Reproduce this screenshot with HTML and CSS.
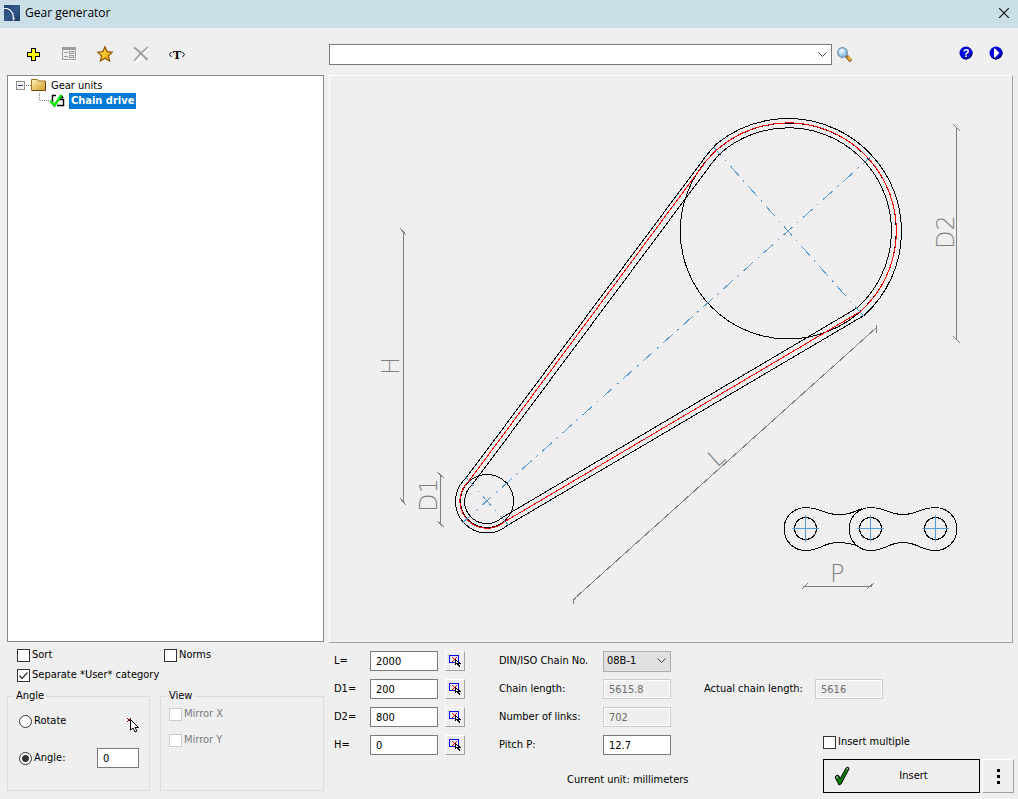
FILE: index.html
```html
<!DOCTYPE html>
<html lang="en">
<head>
<meta charset="utf-8">
<title>Gear generator</title>
<meta name="viewport" content="width=device-width, initial-scale=1">
<link rel="stylesheet" href="styles.css">
</head>
<body>
<svg width="0" height="0" class="defs" aria-hidden="true">
  <symbol id="pick" viewBox="0 0 14 14">
    <g shape-rendering="crispEdges">
      <path d="M1 1h10v8h-10z" fill="#00f"/><path d="M2 2h8v6h-8z" fill="#efefef"/>
      <path d="M4 3h1v1h-1zM8 3h1v1h-1zM5 4h1v1h-1zM7 4h1v1h-1zM6 5h1v1h-1zM5 6h1v1h-1zM4 7h1v1h-1z" fill="#f00"/>
      <path d="M7 5h1v1h1v1h1v1h2v1h1v1h-2v1h1v2h-1v-1h-1v-1h-1v-1h-1v1h-1z" fill="#000"/>
      <path d="M8 7h1v1h1v1h-2z" fill="#efefef"/>
    </g>
  </symbol>
</svg>

<header class="titlebar">
  <svg class="app-icon" viewBox="0 0 16 16" aria-hidden="true">
    <defs><linearGradient id="navy" x1="0" y1="0" x2="1" y2="1"><stop offset="0" stop-color="#23406e"/><stop offset=".5" stop-color="#34588c"/><stop offset="1" stop-color="#1e3960"/></linearGradient></defs>
    <path d="M0 0h16v16H0z" fill="url(#navy)"/>
    <path d="M0 3.500H3L6 5L9 9L9.500 15.500M9 13.500h2" fill="none" stroke="#fff" stroke-width="1.200"/>
  </svg>
  <h1 class="title">Gear generator</h1>
  <button class="close" type="button" aria-label="Close">
    <svg viewBox="0 0 10 10" aria-hidden="true"><path d="M0 0L10 10M10 0L0 10" stroke="#111" stroke-width="1.200"/></svg>
  </button>
</header>

<main class="window">
  <div class="toolbar">
    <button class="tool" type="button" aria-label="Add">
      <svg viewBox="0 0 16 16" shape-rendering="crispEdges"><path d="M6 2h5v4h4v5h-4v4h-5v-4h-4v-5h4z" fill="#000"/><path d="M7 3h3v4h4v3h-4v4h-3v-4h-4v-3h4z" fill="#ff0"/></svg>
    </button>
    <button class="tool" type="button" aria-label="Properties">
      <svg viewBox="0 0 16 16" shape-rendering="crispEdges"><path d="M2 3h14v12H2z" fill="#fff"/><path d="M1.500 1.500h13v12h-13z" fill="#efefef" stroke="#9b9b9b"/><path d="M1 1h14v3H1zM3 6h4v1H3zM3 10h4v1H3z" fill="#9b9b9b"/><path d="M8.500 5.500h4v2h-4zM8.500 9.500h4v2h-4z" fill="none" stroke="#9b9b9b"/></svg>
    </button>
    <button class="tool" type="button" aria-label="Favorites">
      <svg viewBox="0 0 16 16"><defs><linearGradient id="gold" x1="0" y1="0" x2="1" y2="1"><stop offset="0" stop-color="#ffef9c"/><stop offset=".5" stop-color="#fcc52c"/><stop offset="1" stop-color="#d99112"/></linearGradient></defs><path d="M8 .8L10.100 5.600L15.200 6.200L11.500 9.800L12.600 15L8 12.300L3.400 15L4.500 9.800L.8 6.200L5.900 5.600Z" fill="url(#gold)" stroke="#8f5606" stroke-width="1.200"/></svg>
    </button>
    <button class="tool" type="button" aria-label="Delete">
      <svg viewBox="0 0 16 16"><path d="M2 3L15 15M15.500 2.500L3 16" stroke="#fff" stroke-width="2"/><path d="M1 1.500L6 5.500L14.500 14" fill="none" stroke="#9b9b9b" stroke-width="2"/><path d="M15 1L8 7L1.500 14.500" fill="none" stroke="#9b9b9b" stroke-width="1.600"/></svg>
    </button>
    <button class="tool" type="button" aria-label="Text">
      <svg viewBox="0 0 16 16"><text class="t-glyph" x="8" y="13" text-anchor="middle">T</text><path d="M2.500 6L.5 8.500L2.500 11M13.500 6L15.500 8.500L13.500 11" fill="none" stroke="#000"/></svg>
    </button>
  </div>

  <div class="searchbar">
    <select class="search" aria-label="Search"><option></option></select>
    <button class="tool find" type="button" aria-label="Find">
      <svg viewBox="0 0 16 16"><defs><radialGradient id="lens" cx=".4" cy=".35"><stop offset="0" stop-color="#fff"/><stop offset="1" stop-color="#8fc4ea"/></radialGradient></defs><path d="M9.500 9L14 14" stroke="#7a4a12" stroke-width="3.400"/><path d="M10.500 9.800L13.800 13.200" stroke="#f5b83d" stroke-width="2"/><circle cx="5.500" cy="5.500" r="4.800" fill="url(#lens)" stroke="#6f8fae" stroke-width="1.200"/></svg>
    </button>
    <button class="tool help" type="button" aria-label="Help">
      <svg viewBox="0 0 16 16"><circle cx="8" cy="8" r="6.500" fill="#0000d8"/><path d="M3 12A6.500 6.500 0 0 0 14 5.500A7 7 0 0 1 3 12" fill="#000060"/><text class="q-glyph" x="8" y="12" text-anchor="middle">?</text></svg>
    </button>
    <button class="tool play" type="button" aria-label="Play">
      <svg viewBox="0 0 16 16"><circle cx="8" cy="8" r="6.500" fill="#0000d8"/><path d="M3 12A6.500 6.500 0 0 0 14 5.500A7 7 0 0 1 3 12" fill="#000060"/><path d="M6 3.500V12.500H7L11.500 8L7 3.500Z" fill="#fff"/></svg>
    </button>
  </div>

  <nav class="tree" aria-label="Gear units">
    <ul class="nodes">
      <li class="node root">
        <svg class="root-art" viewBox="0 0 34 16" aria-hidden="true">
          <g shape-rendering="crispEdges"><path d="M.5 4.500h8v8h-8z" fill="#f4f4f4" stroke="#8c8c8c"/><path d="M2 8h5v1H2z" fill="#2b3f9c"/><path d="M10 8.500h6" stroke="#808080" stroke-dasharray="1 1"/></g>
          <defs><linearGradient id="fold" x1="0" y1="0" x2="1" y2="1"><stop offset="0" stop-color="#fff2b8"/><stop offset="1" stop-color="#d39b26"/></linearGradient></defs>
          <path d="M15.500 2.500h6l1 1.500h7v9.500h-14z" fill="url(#fold)" stroke="#a4711b"/><path d="M16 13.500h13.500V5" stroke="#6e480c" fill="none"/>
        </svg>
        <span class="node-label">Gear units</span>
      </li>
      <li class="node leaf">
        <svg class="leaf-art" viewBox="0 0 28 16" aria-hidden="true">
          <path d="M.5 0V7.500H11" fill="none" stroke="#808080" stroke-dasharray="1 1" shape-rendering="crispEdges"/>
          <path d="M13.500 11V2.500H17M18 12.500H24.500V6.500H20M20 7L23 3.500L24 5" fill="none" stroke="#000" stroke-width="1.400"/>
          <path d="M11.500 8L15.500 12.500L22.500 2" fill="none" stroke="#0c0" stroke-width="2.600"/>
          <path d="M11.500 7.500L15.500 12L22 2" fill="none" stroke="#0f0" stroke-width="1.200"/>
        </svg>
        <span class="node-label selected">Chain drive</span>
      </li>
    </ul>
  </nav>

  <section class="canvas" aria-label="Chain drive drawing">
    <svg class="drawing" viewBox="330 76 682 566">
      <g class="ink" shape-rendering="crispEdges">
        <circle cx="788.300" cy="231" r="108"/>
        <circle cx="487" cy="501" r="26.500"/>
        <path d="M464 480L466 478L706 156L711.500 149.500L717 143.500A113.500 113.500 0 0 1 901.500 231A113.500 113.500 0 0 1 864 315.500L508 525A31.500 31.500 0 0 1 464 480"/>
        <path d="M472 485L712 163L719.500 154A102.500 102.500 0 0 1 857 308L501.500 518A21 21 0 0 1 472 485"/>
        <path class="red" d="M469 481L707 160L716 150.500A107 107 0 0 1 860.500 311.500L505 521.500A26 26 0 0 1 469 481"/>
      </g>
      <g class="axis" shape-rendering="crispEdges">
        <path d="M788 231L462 523.200M788 231L870 157.500M788 231L714 147.500M788 231L864 316.500"/>
        <path d="M487 501L465.500 477M487 501L508.500 525"/>
      </g>
      <g class="dim" shape-rendering="crispEdges">
        <path d="M403.500 231V502M400 228L406 235M400 498L406 505"/>
        <path d="M440.500 474V524M437 472L444 478M437 521L444 527"/>
        <path d="M956.500 127V339M953 124L960 131M953 336L960 343"/>
        <path d="M574 599L876 328M573.500 604V600L578 595M876.500 325V332.500"/>
        <path d="M803 586.500H872M802 589L808 583M867 589L874 583"/>
      </g>
      <g class="dim-text">
        <text transform="translate(399 375) rotate(-90)">H</text>
        <text transform="translate(437 512) rotate(-90)">D1</text>
        <text transform="translate(954 249) rotate(-90)">D2</text>
        <text transform="translate(717 468) rotate(-42)">L</text>
        <text x="830" y="582">P</text>
      </g>
      <g class="ink" shape-rendering="crispEdges">
        <path d="M870.500 507.500C886 507.500 888 514.500 903 514.500C918 514.500 920 507.500 935.500 507.500A21.500 21.500 0 0 1 935.500 550.500C920 550.500 918 542.500 903 542.500C888 542.500 886 550.500 870.500 550.500A21.500 21.500 0 0 1 870.500 507.500Z"/>
        <path d="M862 508.500C850 514 846 514.500 838 514.500C823 514.500 821 507.500 805.500 507.500A21.500 21.500 0 0 0 805.500 550.500C821 550.500 823 542.500 838 542.500C846 542.500 850 543 858 546"/>
        <circle cx="805.500" cy="528.500" r="11"/><circle cx="870.500" cy="528.500" r="11"/><circle cx="935.500" cy="528.500" r="11"/>
        <path class="blue" d="M792 528.500H819M805.500 515V542M857 528.500H884M870.500 515V542M922 528.500H949M935.500 515V542"/>
      </g>
    </svg>
  </section>

  <section class="options">
    <div class="checks">
      <label class="check"><input type="checkbox">Sort</label>
      <label class="check"><input type="checkbox">Norms</label>
      <label class="check wide"><input type="checkbox" checked>Separate *User* category</label>
    </div>
    <div class="groups">
      <fieldset class="group angle">
        <legend>Angle</legend>
        <div class="line">
          <label class="check"><input type="radio" name="mode">Rotate</label>
          <svg class="cursor" viewBox="0 0 14 16" aria-hidden="true"><path d="M0 1L4 5M4 1L0 5" stroke="#800" shape-rendering="crispEdges"/><path d="M3.500 2.500V13L6 11L8 15L10 14L8 10.500H11.500Z" fill="#fff" stroke="#000"/></svg>
        </div>
        <div class="line">
          <label class="check"><input type="radio" name="mode" checked>Angle:</label>
          <input class="field angle-field" type="text" value="0" aria-label="Angle value">
        </div>
      </fieldset>
      <fieldset class="group view">
        <legend>View</legend>
        <label class="check off"><input type="checkbox" disabled>Mirror X</label>
        <label class="check off"><input type="checkbox" disabled>Mirror Y</label>
      </fieldset>
    </div>
  </section>

  <section class="params">
    <div class="inputs">
      <div class="dims">
        <label for="l">L=</label><input class="field" id="l" type="text" value="2000"><button class="pick" type="button" aria-label="Pick L"><svg><use href="#pick"/></svg></button>
        <label for="d1">D1=</label><input class="field" id="d1" type="text" value="200"><button class="pick" type="button" aria-label="Pick D1"><svg><use href="#pick"/></svg></button>
        <label for="d2">D2=</label><input class="field" id="d2" type="text" value="800"><button class="pick" type="button" aria-label="Pick D2"><svg><use href="#pick"/></svg></button>
        <label for="h">H=</label><input class="field" id="h" type="text" value="0"><button class="pick" type="button" aria-label="Pick H"><svg><use href="#pick"/></svg></button>
      </div>
      <div class="chain">
        <label for="no">DIN/ISO Chain No.</label><select class="chain-no" id="no"><option>08B-1</option></select>
        <label for="len">Chain length:</label><input class="field" id="len" type="text" value="5615.8" disabled>
        <label for="links">Number of links:</label><input class="field" id="links" type="text" value="702" disabled>
        <label for="pitch">Pitch P:</label><input class="field" id="pitch" type="text" value="12.7">
      </div>
      <p class="unit">Current unit: millimeters</p>
    </div>
    <div class="result">
      <div class="actual"><label for="actual">Actual chain length:</label><input class="field" id="actual" type="text" value="5616" disabled></div>
      <div class="actions">
        <label class="check"><input type="checkbox">Insert multiple</label>
        <div class="buttons">
          <button class="insert" type="button">
            <svg viewBox="0 0 16 20" aria-hidden="true"><path d="M1 11L3 9L5 10L6 13L12 2L14 1L15 3L7 18L5 19Z" fill="#008000" stroke="#000"/><path d="M2 11L4 11.500M12.500 3L14 2.500" stroke="#aaa" stroke-width="1.500"/></svg>
            <span>Insert</span>
          </button>
          <button class="more" type="button" aria-label="More"><svg viewBox="0 0 3 15" aria-hidden="true" shape-rendering="crispEdges"><path d="M0 0h3v3H0zM0 6h3v3H0zM0 12h3v3H0z"/></svg></button>
        </div>
      </div>
    </div>
  </section>
</main>
</body>
</html>
```
FILE: styles.css
```css
* { box-sizing: border-box; }

body {
  margin: 0;
  min-height: 100vh;
  display: flex;
  flex-direction: column;
  background: #efefef;
  color: #000;
  font: 11px/16px "DejaVu Sans Condensed", "Noto Sans", sans-serif;
}

button, input, select { font: inherit; color: inherit; margin: 0; }
svg { display: block; }
.defs { position: absolute; }

.titlebar {
  display: flex;
  align-items: center;
  height: 28px;
  padding: 0 9px 3px 4px;
  background: #cbdfe8;
}
.app-icon { width: 16px; height: 16px; }
.title {
  flex: 1;
  margin: 0 0 0 5px;
  font: 12px/16px "Open Sans", "Noto Sans", sans-serif;
}
.close { width: 10px; height: 10px; padding: 0; border: 0; background: none; }
.close svg { width: 10px; height: 10px; }

.window {
  flex: 1;
  display: grid;
  grid-template-columns: 317px minmax(0, 1fr);
  grid-template-rows: 47px minmax(200px, 1fr) auto;
  column-gap: 5px;
  padding: 0 4px 0 7px;
}

.toolbar { display: flex; align-items: center; gap: 20px; padding: 5px 0 0 18px; }
.tool { width: 16px; height: 16px; padding: 0; border: 0; background: none; }
.tool svg { width: 16px; height: 16px; overflow: visible; }
.t-glyph { font: bold 13px "Liberation Serif", serif; }
.q-glyph { font: bold 11px "Liberation Sans", sans-serif; fill: #fff; }

.searchbar { display: flex; align-items: center; padding: 6px 10px 0 0; }
.search, .chain-no {
  appearance: none;
  border-radius: 0;
  background: #fff url("data:image/svg+xml,%3Csvg xmlns='http://www.w3.org/2000/svg' width='9' height='6'%3E%3Cpath d='M.5 .5L4.500 4.500L8.500 .5' fill='none' stroke='%23444'/%3E%3C/svg%3E") no-repeat right 4px center;
}
.search { width: 503px; min-width: 100px; height: 21px; border: 1px solid #7a7a7a; }
.find { margin: 0 auto 0 5px; }
.help { margin-right: 14px; }
.searchbar .help, .searchbar .play { margin-bottom: 4px; }

.tree { margin-bottom: 1px; border: 1px solid #828790; background: #fff; }
.nodes { margin: 0; padding: 1px 0 0 8px; list-style: none; }
.node { display: flex; align-items: center; height: 16px; }
.root-art { width: 34px; height: 16px; }
.leaf-art { width: 28px; height: 16px; margin-left: 23px; }
.node-label { padding: 1px 1px 0; }
.selected {
  padding: 0 2px;
  margin-left: 2px;
  background: #0078d7;
  color: #fff;
  font-weight: bold;
}

.canvas {
  display: flex;
  min-height: 0;
  margin-right: 1px;
  border: 1px solid;
  border-color: #fff #a0a0a0 #a0a0a0 #fff;
}
.drawing { flex: 1; width: 100%; height: 100%; min-width: 0; }
.ink { fill: none; stroke: #000; }
.ink .red { stroke: #f00; }
.ink .blue { stroke: #5b9bd5; }
.axis { fill: none; stroke: #5b9bd5; stroke-dasharray: 13 6 2 6; stroke-dashoffset: 7px; }
.dim { fill: none; stroke: #808080; }
.dim-text { font: 200 24px "DejaVu Sans Light", "Lato", sans-serif; fill: #808080; }

.options { padding: 4px 0 8px; }
.checks {
  display: grid;
  grid-template-columns: 147px 1fr;
  row-gap: 4px;
  padding-left: 10px;
}
.wide { grid-column: span 2; }
.check { display: flex; align-items: center; gap: 2px; height: 16px; }
.check input {
  appearance: none;
  flex: none;
  width: 13px;
  height: 13px;
  border: 1px solid #333;
  background: #fff;
}
.check input[type="checkbox"]:checked {
  background: #fff url("data:image/svg+xml,%3Csvg xmlns='http://www.w3.org/2000/svg' width='11' height='11'%3E%3Cpath d='M1.500 5.500L4 8.500L9.500 2.500' fill='none' stroke='%23333' stroke-width='1.200'/%3E%3C/svg%3E") center no-repeat;
}
.check input[type="radio"] { border-radius: 50%; }
.check input[type="radio"]:checked { background: radial-gradient(circle, #333 0 3px, #fff 4px); }
.off { color: #7a7a7a; }
.check input:disabled { border-color: #ccc; }

.groups { display: flex; gap: 10px; margin-top: 5px; }
.group {
  min-width: 0;
  height: 103px;
  margin: 0;
  padding: 0;
  border: 1px solid #dcdcdc;
}
.group legend { margin-left: 6px; padding: 0 2px; }
.angle { width: 143px; }
.angle .line { display: flex; align-items: center; justify-content: space-between; padding: 0 10px 0 11px; }
.angle .line:nth-of-type(1) { padding-top: 9px; padding-right: 8px; }
.angle .line:nth-of-type(2) { padding-top: 19px; }
.cursor { width: 14px; height: 16px; margin-top: 4px; margin-bottom: -4px; }
.angle-field { width: 42px; height: 23px; }
.view { flex: 1; }
.view .check { margin: 2px 0 0 8px; }
.view .check + .check { margin-top: 10px; }

.field {
  height: 20px;
  padding: 0 5px;
  border: 1px solid #7a7a7a;
  border-radius: 0;
  background: #fff;
}
.field:disabled { border-color: #ccc; background: #efefef; color: #6d6d6d; box-shadow: inset 0 0 0 1px #fff; }

.params { display: flex; align-items: stretch; gap: 23px; padding: 4px 0 6px 5px; }
.inputs { display: grid; grid-template-columns: 131px 172px; column-gap: 34px; align-content: start; }
.dims, .chain { display: grid; grid-auto-rows: 28px; align-items: center; }
.dims { grid-template-columns: 36px 68px 20px; column-gap: 0; }
.dims .pick { margin-left: 7px; }
.chain { grid-template-columns: 104px 68px; }
.dims .field, .chain .field, .chain-no { width: 68px; }
.pick {
  width: 20px;
  height: 20px;
  padding: 2px;
  border: 1px solid;
  border-color: #fff #a0a0a0 #a0a0a0 #fff;
  background: #efefef;
}
.pick svg { width: 14px; height: 14px; }
.chain-no { height: 21px; padding: 0 3px; border: 1px solid #adadad; background-color: #e1e1e1; }
.unit { grid-column: span 2; margin: 13px 0 0 233px; white-space: nowrap; }

.result { flex: 1; display: flex; flex-direction: column; justify-content: space-between; padding-left: 10px; }
.actual { display: flex; align-items: center; justify-content: flex-start; height: 28px; margin-top: 28px; white-space: nowrap; }
.actual label { width: 111px; }
.actual .field { width: 68px; }
.actions { display: flex; flex-direction: column; align-self: flex-end; gap: 9px; }
.buttons { display: flex; gap: 2px; }
.insert {
  display: flex;
  align-items: center;
  width: 157px;
  height: 34px;
  padding: 0 2px 0 10px;
  border: 1px solid #000;
  border-radius: 0;
  background: #efefef;
}
.insert svg { width: 16px; height: 20px; }
.insert span { flex: 1; text-align: center; }
.more {
  display: flex;
  align-items: center;
  justify-content: center;
  width: 32px;
  height: 34px;
  padding: 0;
  border: 1px solid;
  border-color: #fff #a0a0a0 #a0a0a0 #fff;
  background: #efefef;
}
.more svg { width: 3px; height: 15px; }
```
